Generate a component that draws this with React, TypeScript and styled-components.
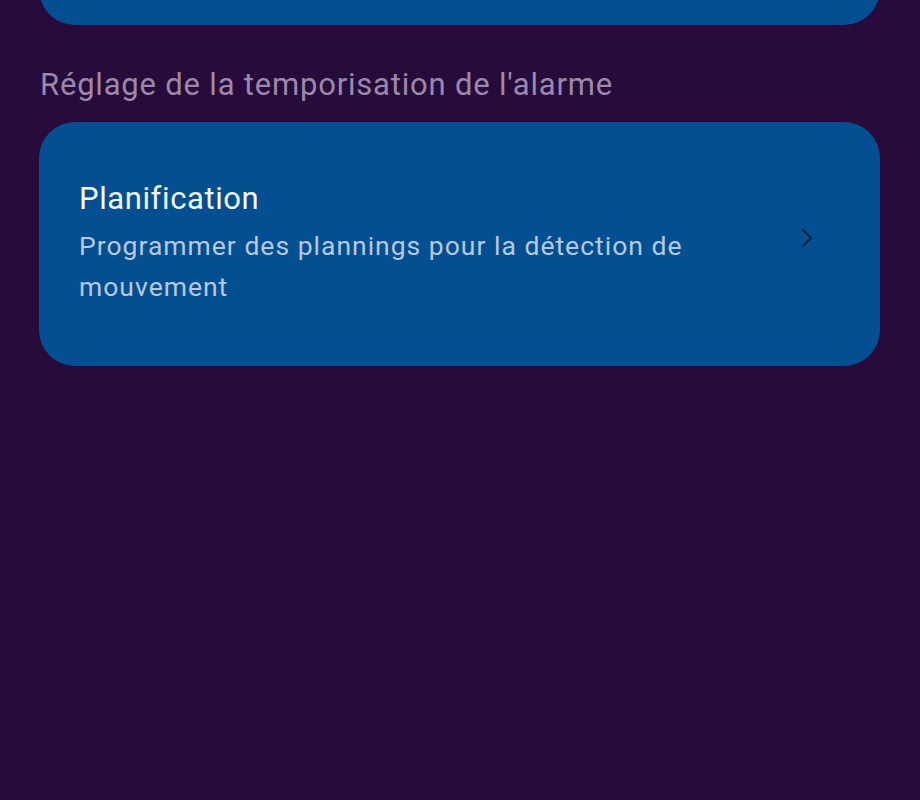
import React from "react";
import styled, { createGlobalStyle } from "styled-components";

const Global = createGlobalStyle`
  html, body {
    margin: 0;
    padding: 0;
    background: #270b3a;
  }
  body {
    font-family: Roboto, "Noto Sans", Arial, sans-serif;
    -webkit-font-smoothing: antialiased;
  }
`;

const Page = styled.div`
  width: 920px;
  height: 800px;
  background: #270b3a;
  padding: 0 40px 0 39px;
  box-sizing: border-box;
  display: flex;
  flex-direction: column;
  overflow: hidden;
`;

const ClippedTop = styled.div`
  height: 25px;
  display: flex;
  align-items: flex-end;
  overflow: hidden;
  flex-shrink: 0;
`;

const Card = styled.div<{ $height?: number }>`
  background: #044f91;
  border-radius: 36px;
  box-sizing: border-box;
  width: 100%;
  flex-shrink: 0;
  ${(p) => (p.$height ? `height: ${p.$height}px;` : "")}
`;

const SectionTitle = styled.h2`
  margin: 0;
  padding: 40px 0 0 1px;
  height: 97px;
  box-sizing: border-box;
  font-size: 31px;
  font-weight: 400;
  line-height: 40px;
  letter-spacing: 0.8px;
  color: #9b89ab;
  white-space: nowrap;
`;

const Row = styled.div`
  display: flex;
  align-items: flex-start;
  padding: 57px 67px 59px 40px;
  gap: 20px;
`;

const Texts = styled.div`
  flex: 1;
  display: flex;
  flex-direction: column;
  gap: 6px;
`;

const Title = styled.div`
  font-size: 31px;
  line-height: 40px;
  letter-spacing: 0.6px;
  color: #f3f6fb;
`;

const Subtitle = styled.div`
  font-size: 26.5px;
  line-height: 41px;
  letter-spacing: 1px;
  color: #b7c9e0;
  max-width: 690px;
`;

const Chevron = styled.svg`
  width: 12px;
  height: 20px;
  flex-shrink: 0;
  margin-top: 49px;
`;

export default function App() {
  return (
    <>
      <Global />
      <Page>
        <ClippedTop>
          <Card $height={80} />
        </ClippedTop>
        <SectionTitle>Réglage de la temporisation de l'alarme</SectionTitle>
        <Card>
          <Row>
            <Texts>
              <Title>Planification</Title>
              <Subtitle>
                Programmer des plannings pour la détection de mouvement
              </Subtitle>
            </Texts>
            <Chevron viewBox="0 0 12 20">
              <path
                d="M2 2 L10 10 L2 18"
                fill="none"
                stroke="#0b2540"
                strokeWidth="2"
                strokeLinecap="round"
                strokeLinejoin="round"
              />
            </Chevron>
          </Row>
        </Card>
      </Page>
    </>
  );
}
